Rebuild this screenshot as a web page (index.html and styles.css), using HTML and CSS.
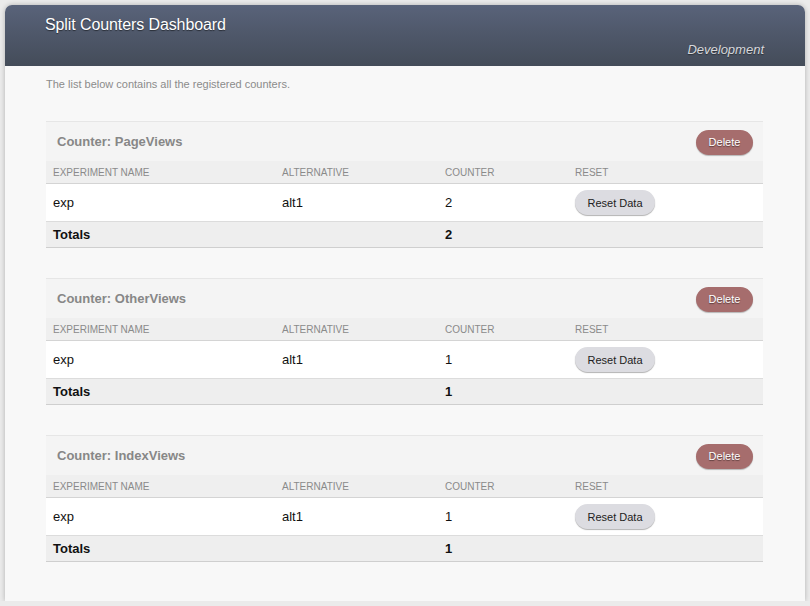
FILE: index.html
```html
<!DOCTYPE html>
<html>
<head>
<meta charset="utf-8">
<title>Split Counters Dashboard</title>
<link rel="stylesheet" href="styles.css">
</head>
<body>
<div class="page">
  <header class="top">
    <h1 class="title">Split Counters Dashboard</h1>
    <div class="env">Development</div>
  </header>
  <main class="content">
    <p class="intro">The list below contains all the registered counters.</p>

    <section class="card">
      <div class="card-head">
        <h2 class="card-title">Counter: PageViews</h2>
        <button class="btn-delete">Delete</button>
      </div>
      <table class="grid">
        <thead>
          <tr><th class="c1">Experiment Name</th><th class="c2">Alternative</th><th class="c3">Counter</th><th class="c4">Reset</th></tr>
        </thead>
        <tbody>
          <tr class="row"><td>exp</td><td>alt1</td><td>2</td><td><button class="btn-reset">Reset Data</button></td></tr>
          <tr class="total"><td>Totals</td><td></td><td>2</td><td></td></tr>
        </tbody>
      </table>
    </section>

    <section class="card">
      <div class="card-head">
        <h2 class="card-title">Counter: OtherViews</h2>
        <button class="btn-delete">Delete</button>
      </div>
      <table class="grid">
        <thead>
          <tr><th class="c1">Experiment Name</th><th class="c2">Alternative</th><th class="c3">Counter</th><th class="c4">Reset</th></tr>
        </thead>
        <tbody>
          <tr class="row"><td>exp</td><td>alt1</td><td>1</td><td><button class="btn-reset">Reset Data</button></td></tr>
          <tr class="total"><td>Totals</td><td></td><td>1</td><td></td></tr>
        </tbody>
      </table>
    </section>

    <section class="card">
      <div class="card-head">
        <h2 class="card-title">Counter: IndexViews</h2>
        <button class="btn-delete">Delete</button>
      </div>
      <table class="grid">
        <thead>
          <tr><th class="c1">Experiment Name</th><th class="c2">Alternative</th><th class="c3">Counter</th><th class="c4">Reset</th></tr>
        </thead>
        <tbody>
          <tr class="row"><td>exp</td><td>alt1</td><td>1</td><td><button class="btn-reset">Reset Data</button></td></tr>
          <tr class="total"><td>Totals</td><td></td><td>1</td><td></td></tr>
        </tbody>
      </table>
    </section>
  </main>
</div>
</body>
</html>
```

FILE: styles.css
```css
html, body {
  margin: 0;
  padding: 0;
}
body {
  background: #ebebeb;
  font-family: "Liberation Sans", Arial, Helvetica, sans-serif;
  color: #111;
  padding: 5px 5px 0 5px;
}
.page {
  width: 800px;
  background: #f8f8f8;
  border-radius: 7px 7px 0 0;
  box-shadow: 0 0 5px rgba(0, 0, 0, 0.25);
}
.top {
  height: 61px;
  box-sizing: border-box;
  padding: 10px 41px 0 40px;
  border-radius: 7px 7px 0 0;
  background: linear-gradient(to bottom, #59637a 0%, #4e5769 50%, #444c59 100%);
  display: flex;
  flex-direction: column;
}
.title {
  margin: 0;
  font-size: 16px;
  line-height: 20px;
  font-weight: normal;
  letter-spacing: -0.1px;
  color: #ffffff;
  text-shadow: 0 1px 1px rgba(0, 0, 0, 0.5);
}
.env {
  align-self: flex-end;
  margin-top: 7px;
  font-size: 13px;
  line-height: 16px;
  font-style: italic;
  color: #d6d8dc;
  text-shadow: 0 1px 1px rgba(0, 0, 0, 0.4);
}
.content {
  display: block;
  padding: 11px 42px 39px 41px;
}
.intro {
  margin: 0 0 30px 0;
  font-size: 11px;
  line-height: 14px;
  color: #8b8b8b;
}
.card {
  margin-bottom: 30px;
  border-top: 1px solid #e6e6e6;
  background: #fff;
}
.card:last-child {
  margin-bottom: 0;
}
.card-head {
  height: 39px;
  box-sizing: border-box;
  padding: 0 10px 0 11px;
  background: #f4f4f4;
  display: flex;
  align-items: center;
  justify-content: space-between;
}
.card-title {
  margin: 0;
  font-size: 13px;
  font-weight: bold;
  color: #878787;
}
.btn-delete {
  width: 57px;
  height: 25px;
  padding: 0;
  border: none;
  border-radius: 13px;
  background: #a66d6d;
  color: #fff;
  font-family: inherit;
  font-size: 11px;
  text-shadow: 0 1px 1px rgba(0, 0, 0, 0.45);
  box-shadow: 0 1px 1px rgba(0, 0, 0, 0.25);
  margin-top: 1px;
}
.grid {
  width: 100%;
  border-collapse: collapse;
  table-layout: fixed;
}
.grid th {
  height: 22px;
  padding: 0 0 0 7px;
  background: #efefef;
  text-align: left;
  font-size: 10px;
  font-weight: normal;
  text-transform: uppercase;
  color: #8a8a8a;
  border-bottom: 1px solid #d4d4d4;
}
.c1 { width: 222px; }
.c2 { width: 156px; }
.c3 { width: 123px; }
.grid td {
  padding: 0 0 0 7px;
  font-size: 13px;
  color: #111;
}
.row td {
  height: 37px;
  background: #fff;
  border-bottom: 1px solid #dcdcdc;
}
.total td {
  height: 25px;
  background: #eeeeee;
  font-weight: bold;
  border-bottom: 1px solid #cfcfcf;
}
.btn-reset {
  display: block;
  width: 80px;
  height: 25px;
  padding: 0;
  border: none;
  border-radius: 13px;
  background: #dcdce1;
  color: #222;
  font-family: inherit;
  font-size: 11px;
  box-shadow: 0 1px 1px rgba(0, 0, 0, 0.3);
}
```
